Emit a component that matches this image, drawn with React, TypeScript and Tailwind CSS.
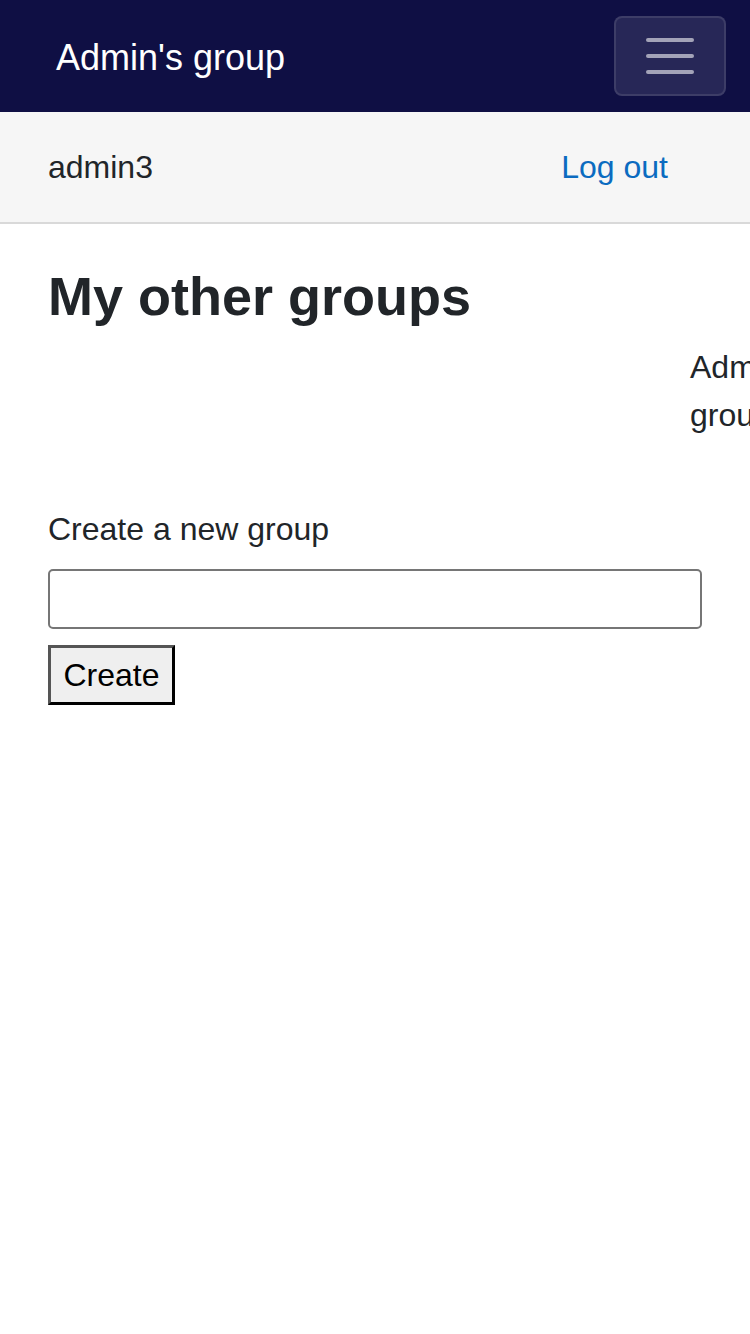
export default function App() {
    return (
        <div className="min-h-[1334px] w-[750px] overflow-hidden bg-white font-['Liberation_Sans',Arial,sans-serif] text-[#212529]">
            <nav className="flex h-[112px] items-center justify-between bg-[#0f0f44] pl-[56px] pr-[24px]">
                <span className="mt-[4px] text-[36px] leading-none text-white">Admin's group</span>
                <button className="flex h-[80px] w-[112px] flex-col items-center justify-center gap-[12px] rounded-[8px] border-2 border-white/10 bg-white/10">
                    <span className="h-[4px] w-[48px] rounded-full bg-[#a3a3b8]" />
                    <span className="h-[4px] w-[48px] rounded-full bg-[#a3a3b8]" />
                    <span className="h-[4px] w-[48px] rounded-full bg-[#a3a3b8]" />
                </button>
            </nav>
            <div className="flex h-[112px] items-center justify-between border-b-2 border-[#d9d9d9] bg-[#f6f6f6] pl-[48px] pr-[82px] text-[32px]">
                <span>admin3</span>
                <a className="text-[#0b6bc0]" href="#">Log out</a>
            </div>
            <div className="px-[48px] pt-[40px]">
                <h2 className="text-[54px] font-bold leading-[1.2]">My other groups</h2>
                <div className="mt-[14px] flex text-[32px] leading-[48px]">
                    <div className="w-[642px] shrink-0" />
                    <div className="w-[200px] shrink-0">Admin's group</div>
                </div>
                <div className="mt-[66px]">
                    <label className="block text-[32px] leading-[48px]">Create a new group</label>
                    <input className="mt-[16px] block h-[60px] w-[654px] rounded-[5px] border-2 border-[#767676] bg-white px-[8px] text-[32px]" type="text" />
                    <button className="mt-[16px] h-[60px] w-[127px] border-[3px] border-t-[#555] border-l-[#555] border-b-black border-r-black bg-[#efefef] text-[32px] text-black">
                        Create
                    </button>
                </div>
            </div>
        </div>
    );
}
